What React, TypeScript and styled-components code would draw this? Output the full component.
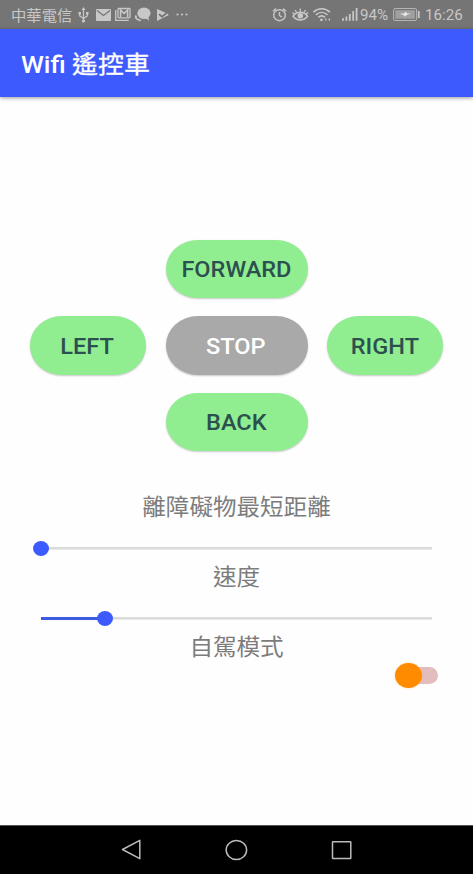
import React from 'react';
import styled, { createGlobalStyle } from 'styled-components';

const Global = createGlobalStyle`
  * { box-sizing: border-box; }
  body { margin: 0; background: #fefefe; font-family: Roboto, "Noto Sans CJK TC", sans-serif; }
`;

const Screen = styled.div`
  width: 473px;
  height: 874px;
  display: flex;
  flex-direction: column;
  overflow: hidden;
  background: #fefefe;
`;

const StatusBar = styled.header`
  height: 29px;
  flex: none;
  display: flex;
  align-items: center;
  padding: 0 11px;
  background: #757575;
  color: #c8c8c8;
`;

const Glyph = styled.svg<{ $gap?: number }>`
  display: block;
  flex: none;
  margin-left: ${p => p.$gap ?? 0}px;
  overflow: visible;
  fill: none;
  stroke: none;
`;

const StatusText = styled.span<{ $size: number; $width: number; $gap?: number; $stretch?: number }>`
  flex: none;
  width: ${p => p.$width}px;
  margin-left: ${p => p.$gap ?? 0}px;
  padding-top: 2px;
  font-size: ${p => p.$size}px;
  line-height: 29px;
  white-space: nowrap;
  transform: scaleX(${p => p.$stretch ?? 1.05});
  transform-origin: left center;
`;

const Carrier = styled(StatusText)`
  padding-top: 0;
  font-family: "Noto Sans CJK TC", sans-serif;
  font-weight: 400;
`;

const Spacer = styled.div`
  flex: 1;
`;

const AppBar = styled.div`
  height: 68px;
  flex: none;
  display: flex;
  align-items: center;
  padding: 1px 0 0 21.3px;
  background: #3d5afe;
  box-shadow: 0 1px 4px rgba(0, 0, 0, 0.4);
`;

const Title = styled.h1`
  margin: 0;
  color: #fff;
  font-size: 24.3px;
  font-weight: 500;
  line-height: 32px;
  white-space: nowrap;
  transform: scaleX(1.067);
  transform-origin: left center;
`;

const TitleHan = styled.span`
  font-family: "Noto Sans CJK TC", sans-serif;
  font-weight: 400;
  -webkit-text-stroke: 0.3px #fff;
`;

const Content = styled.main`
  flex: 1;
  display: flex;
  flex-direction: column;
  padding: 142.5px 30px 0;
`;

const Pad = styled.div`
  display: grid;
  grid-template-columns: 116px 142px 116px;
  grid-template-rows: repeat(3, 58.5px);
  grid-template-areas: ". forward ." "left stop right" ". back .";
  gap: 18px 19.5px;
`;

const PadButton = styled.button<{ $area: string; $neutral?: boolean }>`
  grid-area: ${p => p.$area};
  display: flex;
  align-items: center;
  justify-content: center;
  border: 0;
  padding: 2px 1px 0 0;
  border-radius: 32px / 29.25px;
  background: ${p => (p.$neutral ? '#a9a9a9' : '#90ee90')};
  color: ${p => (p.$neutral ? '#fff' : '#2b504f')};
  box-shadow: 0 1px 2px rgba(0, 0, 0, 0.22);
  font-family: Roboto, sans-serif;
  font-size: 22px;
  font-weight: 500;
`;

const PadLabel = styled.span`
  transform: scaleX(1.07);
`;

const Label = styled.div`
  height: 32px;
  color: #7c7c7c;
  font-family: "Noto Sans CJK TC", sans-serif;
  font-size: 22.4px;
  font-weight: 400;
  line-height: 30px;
  text-align: center;
  white-space: nowrap;
  transform: scaleX(1.052);
`;

const Settings = styled.section`
  padding-top: 38.5px;
`;

const SliderRow = styled.div`
  height: 38px;
  padding: 17.5px 11px 0;
`;

const Track = styled.div`
  height: 18px;
  display: flex;
  align-items: center;
  background: linear-gradient(#dbdbdb, #dbdbdb) center / 100% 2.6px no-repeat;
`;

const Fill = styled.div`
  height: 3px;
  background: #3d5be0;
`;

const Thumb = styled.div`
  width: 16px;
  height: 15px;
  margin-left: -8px;
  border-radius: 50%;
  background: #3d5afe;
`;

const SwitchRow = styled.div`
  display: flex;
  justify-content: flex-end;
  padding: 5px 5px 0 0;
`;

const SwitchTrack = styled.div`
  display: flex;
  align-items: center;
  width: 37px;
  height: 17px;
  border-radius: 9px;
  background: #e3bdbe;
`;

const SwitchThumb = styled.div`
  flex: none;
  width: 26.5px;
  height: 25px;
  margin-left: -6px;
  border-radius: 50%;
  background: #ff8c00;
  box-shadow: 0 0 2px rgba(255, 170, 60, 0.5);
`;

const NavBar = styled.nav`
  height: 49px;
  flex: none;
  display: flex;
  align-items: center;
  padding: 0 0 1px 121px;
  background: #000;
  border-top: 1px solid #555;
`;

const Slider = ({ value }: { value: number }) => (
  <SliderRow>
    <Track>
      <Fill style={{ width: `${value}%` }} />
      <Thumb />
    </Track>
  </SliderRow>
);

const ink = '#c8c8c8';

export default function App() {
  return (
    <>
      <Global />
      <Screen>
        <StatusBar>
          <Carrier $size={14.6} $width={62}>中華電信</Carrier>
          <Glyph $gap={5} width="11" height="16" viewBox="78 7 11 16">
            <path d="M83.5 9v12M79.7 13v3l3.8 2.5 3.8-2.5v-3" stroke={ink} strokeWidth="1.2" />
            <path d="M83.5 7l2 3h-4zM78.5 12h2.5v2.5h-2.5zM86 12h2.5v2.5H86z" fill={ink} />
            <circle cx="83.5" cy="21" r="1.6" fill={ink} />
          </Glyph>
          <Glyph $gap={7} width="15" height="12" viewBox="96 9 15 12">
            <rect x="96" y="9" width="15" height="12" rx="1" fill={ink} />
            <path d="M97 10.5l6.5 5 6.5-5" stroke="#777" strokeWidth="1.3" />
          </Glyph>
          <Glyph $gap={4} width="16" height="13" viewBox="115 9 16 13">
            <path d="M115.7 11v10.3h13" stroke={ink} strokeWidth="1.3" />
            <rect x="118" y="9.5" width="12" height="9.4" rx="0.8" stroke={ink} strokeWidth="1.3" />
            <path d="M120.6 18v-7l3.5 3.6 3.5-3.6v7" stroke={ink} strokeWidth="1.6" />
          </Glyph>
          <Glyph $gap={4} width="16" height="15" viewBox="135 7.5 16 15">
            <ellipse cx="144" cy="13.8" rx="6.6" ry="5.8" fill={ink} />
            <path d="M145 18l4 3.2-.8-4.5z" fill={ink} />
            <path d="M136.2 15.8c-1 2-.2 3.2 1.2 4 1.2.6 2.2.5 3.2 1.6" stroke={ink} strokeWidth="1.7" />
          </Glyph>
          <Glyph $gap={6} width="12" height="12" viewBox="157 9 12 12">
            <path d="M157 9l8.6 3.8-3.6 2.6-2.4-2-1.2 1.3 3.6 3.2 5.4-4.5 1.4 1.5L157 21z" fill={ink} />
          </Glyph>
          <Glyph $gap={7} width="13" height="3" viewBox="176 13.5 13 3">
            <circle cx="177.5" cy="15" r="1.1" fill={ink} />
            <circle cx="182" cy="15" r="1.1" fill={ink} />
            <circle cx="186.5" cy="15" r="1.1" fill={ink} />
          </Glyph>
          <Spacer />
          <Glyph width="15" height="14" viewBox="272.5 8 15 14">
            <ellipse cx="280" cy="15.2" rx="5.8" ry="5.5" stroke={ink} strokeWidth="1.4" />
            <path d="M280 12v3.5l2.4 1.6M273.4 11.2l3.2-2.6M286.6 11.2l-3.2-2.6" stroke={ink} strokeWidth="1.4" />
          </Glyph>
          <Glyph $gap={4.5} width="17" height="14" viewBox="292 8 17 14">
            <path d="M293 16.2c3.8-5.2 10.6-5.2 14.6 0-4 5-10.8 5-14.6 0z" stroke={ink} strokeWidth="1.5" />
            <circle cx="300.3" cy="15.8" r="2.8" fill={ink} />
            <path d="M300.3 8.5v3M295 10l1.5 2.2M305.6 10l-1.5 2.2M292.5 12.6l1.8 1.5M308 12.6l-1.8 1.5" stroke={ink} strokeWidth="1.3" />
          </Glyph>
          <Glyph $gap={4} width="18" height="14" viewBox="313 8 18 14">
            <path d="M313.4 12.2c4.8-4.6 11.7-4.6 16.5 0M315.8 14.9c3.5-3.2 8.2-3.2 11.7 0M318.3 17.4c2.1-1.8 4.7-1.8 6.7 0" stroke={ink} strokeWidth="1.6" />
            <circle cx="321.4" cy="19.8" r="1.4" fill={ink} />
            <path d="M325.2 18v3l1.7-1.4zM330 18v3l-1.8-1.5z" fill={ink} />
          </Glyph>
          <Glyph $gap={11} width="16" height="13" viewBox="342 8.5 16 13">
            <path d="M343 18.7v2.5M346.4 17v4.2M349.8 14.4v6.8M353.2 11.6v9.6M356.6 8.5v12.7" stroke={ink} strokeWidth="1.8" />
          </Glyph>
          <StatusText $size={14.7} $width={28} $gap={2.2} $stretch={1.03}>94%</StatusText>
          <Glyph $gap={4.5} width="27" height="13" viewBox="393 8.5 27 13">
            <rect x="393.6" y="9" width="23" height="12" rx="1.5" stroke="#b5b5b5" strokeWidth="1" />
            <rect x="395.3" y="10.7" width="19.6" height="8.6" fill="#a0a0a0" />
            <path d="M399.5 14.2l5-.2.6-2 2 2.1h3.5l-4.7 1.7-.7 1.5-1.6-1.7z" fill="#ededed" />
            <path d="M418.8 11.5v7" stroke={ink} strokeWidth="1.8" />
          </Glyph>
          <StatusText $size={14.7} $width={37} $gap={5.5} $stretch={1.03}>16:26</StatusText>
        </StatusBar>
        <AppBar>
          <Title>Wifi <TitleHan>遙控車</TitleHan></Title>
        </AppBar>
        <Content>
          <Pad>
            <PadButton $area="forward"><PadLabel>FORWARD</PadLabel></PadButton>
            <PadButton $area="left"><PadLabel>LEFT</PadLabel></PadButton>
            <PadButton $area="stop" $neutral><PadLabel>STOP</PadLabel></PadButton>
            <PadButton $area="right"><PadLabel>RIGHT</PadLabel></PadButton>
            <PadButton $area="back"><PadLabel>BACK</PadLabel></PadButton>
          </Pad>
          <Settings>
            <Label>離障礙物最短距離</Label>
            <Slider value={0} />
            <Label>速度</Label>
            <Slider value={16.3} />
            <Label>自駕模式</Label>
          </Settings>
          <SwitchRow>
            <SwitchTrack><SwitchThumb /></SwitchTrack>
          </SwitchRow>
        </Content>
        <NavBar>
          <Glyph width="21" height="21" viewBox="121 839 21 21">
            <path d="M139.8 840.3v18.4l-17.3-9.2z" stroke="#bbb" strokeWidth="1.5" strokeLinejoin="round" />
          </Glyph>
          <Glyph $gap={83} width="23" height="22" viewBox="225 838.5 23 22">
            <ellipse cx="236.4" cy="849.5" rx="10.2" ry="9.6" stroke="#bbb" strokeWidth="1.5" />
          </Glyph>
          <Glyph $gap={83} width="21" height="20" viewBox="331 839.5 21 20">
            <rect x="332.5" y="841.2" width="18.3" height="16.8" rx="0.5" stroke="#bbb" strokeWidth="1.5" />
          </Glyph>
        </NavBar>
      </Screen>
    </>
  );
}
